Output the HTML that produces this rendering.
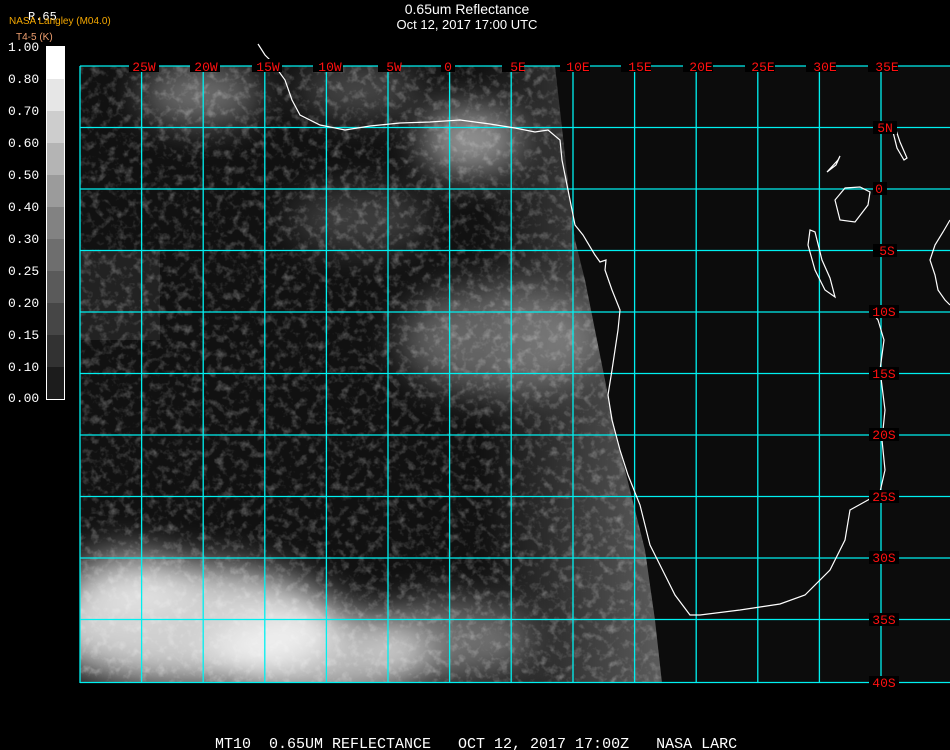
<!DOCTYPE html>
<html><head><meta charset="utf-8"><style>
html,body{margin:0;padding:0;background:#000;width:950px;height:750px;overflow:hidden}
body{position:relative;font-family:"Liberation Mono",monospace}
.t{position:absolute;color:#fff;font-family:"Liberation Sans",sans-serif;text-align:center;width:400px;left:267px}
.lg{position:absolute;left:8px;color:#fff;font-size:13px;line-height:14px}
.bar{position:absolute;left:46px;width:17px;border:1px solid #fff;top:46px}
.bar div{height:32px}
</style></head><body>
<div class="t" style="top:1px;font-size:14px">0.65um Reflectance</div>
<div class="t" style="top:17px;font-size:13px">Oct 12, 2017 17:00 UTC</div>
<div style="position:absolute;left:28px;top:10px;color:#fff;font-size:12px">R.65</div>
<div style="position:absolute;left:9px;top:16px;color:#f5a800;font-family:'Liberation Sans',sans-serif;font-size:10px">NASA Langley (M04.0)</div>
<div style="position:absolute;left:16px;top:32px;color:#f0a070;font-family:'Liberation Sans',sans-serif;font-size:10px">T4-5 (K)</div>
<div class="bar">
<div style="background:#fff"></div><div style="background:#e6e6e6"></div><div style="background:#cdcdcd"></div><div style="background:#b4b4b4"></div><div style="background:#9b9b9b"></div><div style="background:#828282"></div><div style="background:#6e6e6e"></div><div style="background:#5a5a5a"></div><div style="background:#464646"></div><div style="background:#323232"></div><div style="background:#1c1c1c;height:32px"></div>
</div>
<div class="lg" style="top:41px">1.00</div>
<div class="lg" style="top:73px">0.80</div>
<div class="lg" style="top:105px">0.70</div>
<div class="lg" style="top:137px">0.60</div>
<div class="lg" style="top:169px">0.50</div>
<div class="lg" style="top:201px">0.40</div>
<div class="lg" style="top:233px">0.30</div>
<div class="lg" style="top:265px">0.25</div>
<div class="lg" style="top:297px">0.20</div>
<div class="lg" style="top:329px">0.15</div>
<div class="lg" style="top:361px">0.10</div>
<div class="lg" style="top:392px">0.00</div>

<svg width="950" height="750" style="position:absolute;left:0;top:0" xmlns="http://www.w3.org/2000/svg">
<defs>
<clipPath id="sea"><polygon points="80,66 555,66 560,110 570,200 575,240 585,280 595,330 605,380 615,430 630,490 645,550 655,620 662,683 80,683"/></clipPath>
<filter id="noise" x="0" y="0" width="100%" height="100%">
<feTurbulence type="fractalNoise" baseFrequency="0.12" numOctaves="3" seed="7"/>
<feColorMatrix type="matrix" values="0 0 0 0 1  0 0 0 0 1  0 0 0 0 1  2.4 0 0 0 -1.15"/>
</filter>
<filter id="bl"><feGaussianBlur stdDeviation="18"/></filter>
<linearGradient id="cst" x1="0" x2="1"><stop offset="0" stop-color="#fff" stop-opacity="0"/><stop offset="1" stop-color="#fff" stop-opacity="0.55"/></linearGradient>
</defs>
<rect x="80" y="66" width="870" height="617" fill="#0c0c0c"/>
<g clip-path="url(#sea)">
<rect x="80" y="66" width="600" height="617" fill="#111"/>
<rect x="80" y="250" width="80" height="90" fill="#222"/>
<rect x="480" y="66" width="190" height="617" fill="url(#cst)" opacity="0.6"/>
<g filter="url(#bl)" fill="#fff">
<ellipse cx="200" cy="95" rx="60" ry="30" opacity="0.4"/>
<ellipse cx="470" cy="140" rx="50" ry="35" opacity="0.55"/>
<ellipse cx="360" cy="90" rx="60" ry="25" opacity="0.25"/>
<ellipse cx="500" cy="340" rx="100" ry="55" opacity="0.35"/>
<ellipse cx="360" cy="220" rx="70" ry="30" opacity="0.2"/>
<ellipse cx="190" cy="625" rx="150" ry="60" opacity="0.8"/>
<ellipse cx="320" cy="655" rx="110" ry="45" opacity="0.7"/>
<ellipse cx="450" cy="640" rx="80" ry="40" opacity="0.4"/>
<ellipse cx="130" cy="580" rx="60" ry="30" opacity="0.55"/>
</g>
<rect x="80" y="66" width="600" height="617" filter="url(#noise)" opacity="0.3"/>
</g>
<g stroke="#00f0f0" stroke-width="1.3" fill="none">
<path d="M80,66V683M141.6,66V683M203.2,66V683M264.8,66V683M326.4,66V683M388,66V683M449.6,66V683M511.2,66V683M573,66V683M634.6,66V683M696.2,66V683M757.8,66V683M819.4,66V683M881,66V683"/>
<path d="M80,66H950M80,127.5H950M80,189H950M80,250.5H950M80,312H950M80,373.5H950M80,435H950M80,496.5H950M80,558H950M80,619.5H950M80,682.5H950"/>
</g>
<g stroke="#fff" stroke-width="1.2" fill="none">
<path d="M258,44 L265,55 L272,62 L285,80 L292,100 L300,115 L320,125 L345,130 L370,126 L400,123 L430,122 L460,120 L490,124 L515,128 L535,132 L548,130 L560,140 L562,160 L570,200 L575,225 L583,235 L595,255 L600,262 L606,260 L605,270 L612,290 L620,310 L618,330 L615,350 L612,370 L608,395 L612,420 L620,450 L628,475 L640,505 L650,545 L665,575 L675,595 L690,615 L700,615 L740,610 L780,604 L805,595 L830,570 L845,540 L850,510 L868,500 L880,492 L885,470 L882,440 L885,410 L880,370 L884,340 L878,320 L870,310"/>
<path d="M950,220 L943,232 L935,245 L930,260 L935,275 L938,290 L945,300 L950,305"/>
<path d="M845,188 L835,200 L840,220 L855,222 L868,205 L870,192 L860,187 Z"/>
<path d="M810,230 L808,245 L815,270 L825,290 L835,297 L830,278 L822,260 L815,232 Z"/>
<path d="M893,132 L897,148 L904,160 L907,158 L900,142 L896,130 Z"/>
<path d="M827,172 L838,160 L840,156 L836,165 Z"/>
</g>
<g font-family="'Liberation Mono',monospace" font-size="13" fill="#ff1010" text-anchor="middle">
<g fill="#000"><rect x="129" y="59" width="30" height="13"/><rect x="190" y="59" width="30" height="13"/><rect x="252" y="59" width="30" height="13"/><rect x="313" y="59" width="30" height="13"/><rect x="378" y="59" width="22" height="13"/><rect x="441" y="59" width="14" height="13"/><rect x="502" y="59" width="22" height="13"/><rect x="560" y="59" width="30" height="13"/><rect x="621" y="59" width="30" height="13"/><rect x="683" y="59" width="30" height="13"/><rect x="745" y="59" width="30" height="13"/><rect x="806" y="59" width="30" height="13"/><rect x="868" y="59" width="30" height="13"/>
<rect x="873" y="121" width="24" height="13"/><rect x="873" y="182" width="14" height="13"/><rect x="873" y="244" width="24" height="13"/><rect x="869" y="305" width="30" height="13"/><rect x="869" y="367" width="30" height="13"/><rect x="869" y="428" width="30" height="13"/><rect x="869" y="490" width="30" height="13"/><rect x="869" y="551" width="30" height="13"/><rect x="869" y="613" width="30" height="13"/><rect x="869" y="676" width="30" height="13"/></g>
<text x="144" y="71">25W</text><text x="206" y="71">20W</text><text x="268" y="71">15W</text><text x="330" y="71">10W</text><text x="394" y="71">5W</text><text x="448" y="71">0</text><text x="518" y="71">5E</text><text x="578" y="71">10E</text><text x="640" y="71">15E</text><text x="701" y="71">20E</text><text x="763" y="71">25E</text><text x="825" y="71">30E</text><text x="887" y="71">35E</text>
<text x="885" y="132">5N</text><text x="879" y="193">0</text><text x="887" y="255">5S</text><text x="884" y="316">10S</text><text x="884" y="378">15S</text><text x="884" y="439">20S</text><text x="884" y="501">25S</text><text x="884" y="562">30S</text><text x="884" y="624">35S</text><text x="884" y="687">40S</text>
</g>
<text x="215" y="748" font-family="'Liberation Mono',monospace" font-size="15" fill="#fff" xml:space="preserve">MT10  0.65UM REFLECTANCE   OCT 12, 2017 17:00Z   NASA LARC</text>
</svg>
</body></html>
